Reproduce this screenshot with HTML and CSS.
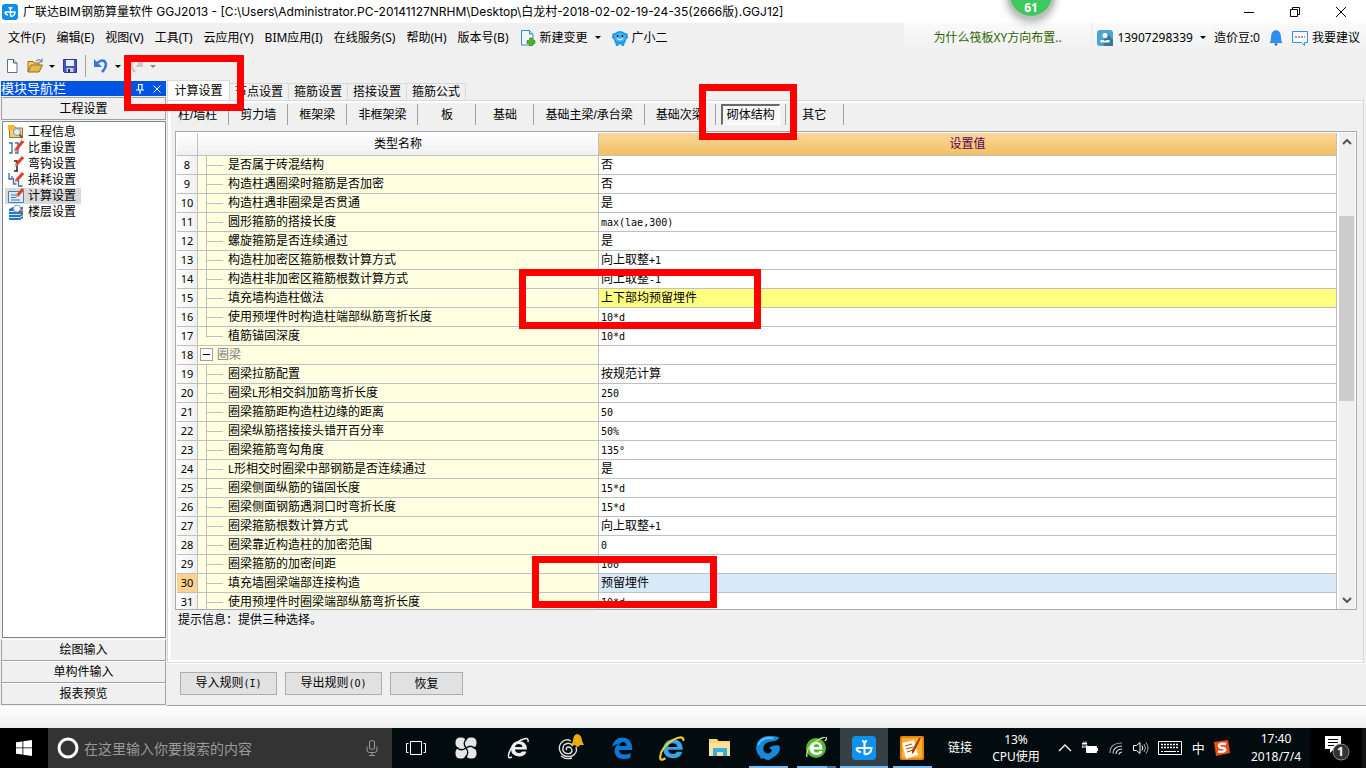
FILE: index.html
```html
<!DOCTYPE html>
<html lang="zh-CN">
<head>
<meta charset="utf-8">
<title>广联达BIM钢筋算量软件 GGJ2013</title>
<link rel="stylesheet" href="styles.css">
</head>
<body>
<header class="titlebar">
  <svg class="icon16" viewBox="0 0 16 16"><rect width="16" height="16" rx="3" fill="#0b8fe8"/><path d="M8.500 12.500V5.500q0-2-2-2M8.500 5.500q0-2 2-2M3 8h10q0 4-4.500 4.500M3 8q0 2.500 3 3" fill="none" stroke="#fff" stroke-width="1.400"/></svg>
  <h1 class="title">广联达BIM钢筋算量软件 GGJ2013 - [C:\Users\Administrator.PC-20141127NRHM\Desktop\白龙村-2018-02-02-19-24-35(2666版).GGJ12]</h1>
  <button class="winbtn" aria-label="最小化"><svg viewBox="0 0 12 12"><path d="M1 6.500h10" stroke="#000" fill="none"/></svg></button>
  <button class="winbtn" aria-label="还原"><svg viewBox="0 0 12 12"><path d="M1.500 3.500h7v7h-7zM3.500 3.500v-2h7v7h-2" stroke="#000" fill="none"/></svg></button>
  <button class="winbtn" aria-label="关闭"><svg viewBox="0 0 12 12"><path d="M1 1l10 10M11 1L1 11" stroke="#000" fill="none"/></svg></button>
</header>

<nav class="menubar">
  <div class="menus">
    <button>文件(F)</button><button>编辑(E)</button><button>视图(V)</button><button>工具(T)</button><button>云应用(Y)</button><button>BIM应用(I)</button><button>在线服务(S)</button><button>帮助(H)</button><button>版本号(B)</button>
    <button class="withicon"><svg class="icon16" viewBox="0 0 16 16"><path d="M1.500.5h8l3.500 3.500v11h-11.500z" fill="#eef7fd" stroke="#2d8fd0"/><path d="M9.500.5v3.500H13" fill="#bfe0f5" stroke="#2d8fd0"/><path d="M9.500 8h3v2.500H15v3h-2.500V16h-3v-2.500H7v-3h2.500z" fill="#4fb61c" stroke="#2f8010" stroke-width=".6"/></svg>新建变更<i class="caret"></i></button>
    <button class="withicon"><svg class="icon16" viewBox="0 0 16 16"><path d="M3 3q5-4 10 0l2.500.5.5 4.500-2 1.500q0 2-1.500 4l-.5 2.500H9.500v-1.500h-3V16H4l-.5-2.500Q2 11.500 2 9.500L0 8l.5-4.500z" fill="#1f9be6"/><ellipse cx="8" cy="7.500" rx="5.500" ry="4.500" fill="#45b2f2"/><circle cx="5.600" cy="6" r="1" fill="#123"/><circle cx="10.400" cy="6" r="1" fill="#123"/><path d="M5 8.500q3 3 6 0" stroke="#fff" fill="none"/></svg>广小二</button>
  </div>
  <a class="tip" href="#">为什么筏板XY方向布置..</a>
  <div class="account">
    <button class="withicon"><svg class="icon16" viewBox="0 0 16 16"><rect width="16" height="16" rx="3" fill="#4ba5d2"/><path d="M6 11l5-7 5 6v6h-9z" fill="#32789f"/><circle cx="8" cy="5.500" r="2.600" fill="#fff"/><path d="M3.500 12.500v-2.500h3L8 11l1.500-1h3v2.500z" fill="#fff"/></svg>13907298339<i class="caret"></i></button>
    <button>造价豆:0</button>
    <button aria-label="通知"><svg class="icon16" viewBox="0 0 16 16"><path d="M8 0q5 1 5 7 0 4 1.500 6h-13Q3 11 3 7 3 1 8 0z" fill="#2f8ff0"/><path d="M6 13.500h4L8 16z" fill="#1a4f8c"/></svg></button>
    <button class="withicon"><svg class="icon16" viewBox="0 0 16 16"><path d="M.5 1.500h15v11h-3v3l-3-3h-9z" fill="#f9fcff" stroke="#2f8ff0"/><path d="M3 7h2m1 0h2m1 0h2m1 0h1" stroke="#444"/></svg>我要建议</button>
  </div>
</nav>

<div class="toolbar">
  <button aria-label="新建"><svg class="icon16" viewBox="0 0 16 16"><path d="M3.500 1.500h6l3.500 3.500v9.500H3.500z" fill="#fff" stroke="#5a7288"/><path d="M9.500 1.500v3.500H13" fill="#d7e6f3" stroke="#40586c"/></svg></button>
  <button class="split" aria-label="打开"><svg class="icon16" viewBox="0 0 16 16"><path d="M1 14V3.500h5l1 1.500h5v2" fill="#f4cf71" stroke="#8d6c1d"/><path d="M1 14l3-7h11.500l-3.500 7z" fill="#e8b84c" stroke="#8d6c1d"/><path d="M9 3q3-3 5.500 0M15 .5V4h-3" fill="none" stroke="#5a6f86"/></svg><i class="caret"></i></button>
  <button aria-label="保存"><svg class="icon16" viewBox="0 0 16 16"><path d="M1.500 1.500h13v13h-12l-1-1z" fill="#4255c4" stroke="#2d388f"/><path d="M4 2h8v6H4z" fill="#e8eefb"/><path d="M4.500 10h7v4h-7z" fill="#c5cde6"/><path d="M6 11h2v3H6z" fill="#222f66"/></svg></button>
  <i class="bar"></i>
  <button class="split" aria-label="撤销"><svg class="icon16" viewBox="0 0 16 16"><path d="M3 6q8-7 10 0 0 4-4 8" fill="none" stroke="#3976d5" stroke-width="2.500"/><path d="M1 1v8h8z" fill="#3976d5"/></svg><i class="caret"></i></button>
  <button class="split off" aria-label="重做"><svg class="icon16" viewBox="0 0 16 16"><path d="M13 6Q5-1 3 6q0 4 4 8" fill="none" stroke="#c9c9c9" stroke-width="2.500"/><path d="M15 1v8H7z" fill="#c9c9c9"/></svg><i class="caret"></i></button>
</div>

<main class="main">
  <aside class="side">
    <h2 class="sidehead"><span>模块导航栏</span>
      <button aria-label="固定"><svg viewBox="0 0 10 10"><path d="M3 .5h5M3.500 0v6M7 0v6M1 6h8M5 6v4" stroke="#fff" stroke-width="1.200" fill="none"/></svg></button>
      <button aria-label="关闭"><svg viewBox="0 0 10 10"><path d="M1.500 1.500l7 7M8.500 1.500l-7 7" stroke="#fff" fill="none"/></svg></button>
    </h2>
    <button class="sidebtn first">工程设置</button>
    <ul class="modules">
      <li><button><svg class="icon16" viewBox="0 0 16 16"><path d="M1.500 13.500v-11h5L8 4h6.500v9.500z" fill="#f2cf76" stroke="#9b7833"/><path d="M0 1h6v5H0z" fill="#ffb91f"/><circle cx="9" cy="8" r="3.500" fill="#dceffc" stroke="#7894ad"/><path d="M11.500 10.500l3 3.500" stroke="#8a5b28" stroke-width="2"/></svg>工程信息</button></li>
      <li><button><svg class="icon16" viewBox="0 0 16 16"><path d="M1 3h3v10H1M7 3h3v10H7" fill="none" stroke="#3a6cb0" stroke-width="1.300"/><path d="M15 1L7 11" stroke="#e2402b" stroke-width="3"/><path d="M7.500 9l1.500 1.500L6 13z" fill="#d9a86c"/></svg>比重设置</button></li>
      <li><button><svg class="icon16" viewBox="0 0 16 16"><path d="M6 5h3v10M6 15h4" fill="none" stroke="#222" stroke-width="1.500"/><path d="M15 1L8 9" stroke="#e2402b" stroke-width="3"/><path d="M7.500 7l2 2L6 11z" fill="#d9a86c"/></svg>弯钩设置</button></li>
      <li><button><svg class="icon16" viewBox="0 0 16 16"><path d="M1 1v6h3v-3M5.500 6v6h3M10.500 8v6h4" fill="none" stroke="#3a6cb0" stroke-width="1.300"/><path d="M15 1L8 9" stroke="#e2402b" stroke-width="3"/><path d="M7.500 7l2 2L6 11z" fill="#d9a86c"/></svg>损耗设置</button></li>
      <li><button class="on"><svg class="icon16" viewBox="0 0 16 16"><path d="M.5 3.500h15v11H.5z" fill="#dcebfa" stroke="#4a7fb5"/><path d="M3 7h5M3 9.500h5M3 12h9" stroke="#3f78b5"/><path d="M15 1L9 8" stroke="#e2402b" stroke-width="3"/><path d="M8.500 6l2 2L7 10z" fill="#d9a86c"/></svg>计算设置</button></li>
      <li><button><svg class="icon16" viewBox="0 0 16 16"><path d="M1 5l4-2h10v11l-3 2H1z" fill="#2577c6"/><path d="M1 7.500h11l3-2M1 10.500h11l3-2M1 13.500h11l3-2" stroke="#cfe4f7" fill="none"/><circle cx="9" cy="4.500" r="3.500" fill="#eef7fd" stroke="#8aa2b8"/><path d="M11.500 7l3 3" stroke="#8a5b28" stroke-width="2"/></svg>楼层设置</button></li>
    </ul>
    <button class="sidebtn">绘图输入</button>
    <button class="sidebtn">单构件输入</button>
    <button class="sidebtn">报表预览</button>
  </aside>

  <section class="work">
    <div class="tabs">
      <button class="on">计算设置</button><button>节点设置</button><button>箍筋设置</button><button>搭接设置</button><button>箍筋公式</button>
    </div>
    <div class="page">
      <div class="parts">
        <button>柱/墙柱</button><button>剪力墙</button><button>框架梁</button><button>非框架梁</button><button>板</button><button>基础</button><button>基础主梁/承台梁</button><button>基础次梁</button><button class="on"><span>砌体结构</span></button><button>其它</button>
      </div>
      <div class="grid">
        <div class="view">
          <table>
            <colgroup><col class="cnum"><col class="cname"><col></colgroup>
            <thead><tr><th></th><th>类型名称</th><th class="hot">设置值</th></tr></thead>
            <tbody>
              <tr><th>8</th><td><i class="branch"></i>是否属于砖混结构</td><td>否</td></tr>
              <tr><th>9</th><td><i class="branch"></i>构造柱遇圈梁时箍筋是否加密</td><td>否</td></tr>
              <tr><th>10</th><td><i class="branch"></i>构造柱遇非圈梁是否贯通</td><td>是</td></tr>
              <tr><th>11</th><td><i class="branch"></i>圆形箍筋的搭接长度</td><td><code>max(lae,300)</code></td></tr>
              <tr><th>12</th><td><i class="branch"></i>螺旋箍筋是否连续通过</td><td>是</td></tr>
              <tr><th>13</th><td><i class="branch"></i>构造柱加密区箍筋根数计算方式</td><td>向上取整<code>+1</code></td></tr>
              <tr><th>14</th><td><i class="branch"></i>构造柱非加密区箍筋根数计算方式</td><td>向上取整<code>-1</code></td></tr>
              <tr class="changed"><th>15</th><td><i class="branch"></i>填充墙构造柱做法</td><td>上下部均预留埋件</td></tr>
              <tr><th>16</th><td><i class="branch"></i>使用预埋件时构造柱端部纵筋弯折长度</td><td><code>10*d</code></td></tr>
              <tr><th>17</th><td><i class="branch last"></i>植筋锚固深度</td><td><code>10*d</code></td></tr>
              <tr class="group"><th>18</th><td><button class="fold" aria-label="折叠"></button>圈梁</td><td></td></tr>
              <tr><th>19</th><td><i class="branch"></i>圈梁拉筋配置</td><td>按规范计算</td></tr>
              <tr><th>20</th><td><i class="branch"></i>圈梁<code>L</code>形相交斜加筋弯折长度</td><td><code>250</code></td></tr>
              <tr><th>21</th><td><i class="branch"></i>圈梁箍筋距构造柱边缘的距离</td><td><code>50</code></td></tr>
              <tr><th>22</th><td><i class="branch"></i>圈梁纵筋搭接接头错开百分率</td><td><code>50%</code></td></tr>
              <tr><th>23</th><td><i class="branch"></i>圈梁箍筋弯勾角度</td><td><code>135°</code></td></tr>
              <tr><th>24</th><td><i class="branch"></i><code>L</code>形相交时圈梁中部钢筋是否连续通过</td><td>是</td></tr>
              <tr><th>25</th><td><i class="branch"></i>圈梁侧面纵筋的锚固长度</td><td><code>15*d</code></td></tr>
              <tr><th>26</th><td><i class="branch"></i>圈梁侧面钢筋遇洞口时弯折长度</td><td><code>15*d</code></td></tr>
              <tr><th>27</th><td><i class="branch"></i>圈梁箍筋根数计算方式</td><td>向上取整<code>+1</code></td></tr>
              <tr><th>28</th><td><i class="branch"></i>圈梁靠近构造柱的加密范围</td><td><code>0</code></td></tr>
              <tr><th>29</th><td><i class="branch"></i>圈梁箍筋的加密间距</td><td><code>100</code></td></tr>
              <tr class="current"><th>30</th><td><i class="branch"></i>填充墙圈梁端部连接构造</td><td>预留埋件</td></tr>
              <tr><th>31</th><td><i class="branch"></i>使用预埋件时圈梁端部纵筋弯折长度</td><td><code>10*d</code></td></tr>
            </tbody>
          </table>
        </div>
        <div class="scroll">
          <button aria-label="向上"><svg viewBox="0 0 10 6"><path d="M1 5l4-4 4 4" fill="none" stroke="#555" stroke-width="2"/></svg></button>
          <i class="above"></i><i class="thumb"></i><i class="below"></i>
          <button aria-label="向下"><svg viewBox="0 0 10 6"><path d="M1 1l4 4 4-4" fill="none" stroke="#555" stroke-width="2"/></svg></button>
        </div>
      </div>
      <p class="hint">提示信息：提供三种选择。</p>
    </div>
    <div class="actions">
      <button>导入规则<code>(I)</code></button><button>导出规则<code>(O)</code></button><button class="small">恢复</button>
    </div>
  </section>
</main>

<div class="status"></div>

<footer class="taskbar">
  <button class="start" aria-label="开始"><svg class="icon16" viewBox="0 0 16 16"><path d="M0 2.300L6.500 1.400v6.100H0zM7.300 1.300L16 0v7.500H7.300zM0 8.300h6.500v6.300L0 13.700zM7.300 8.300H16V16l-8.700-1.300z" fill="#fff"/></svg></button>
  <div class="search">
    <svg class="icon22" viewBox="0 0 22 22"><circle cx="11" cy="11" r="9" fill="none" stroke="#fff" stroke-width="3"/></svg>
    <input type="text" aria-label="搜索" placeholder="在这里输入你要搜索的内容">
    <svg class="icon16" viewBox="0 0 16 16"><path d="M5.500 1.500q2.500-2 5 0v7q-2.500 2-5 0zM3 6.500v3.500q0 2.500 2.500 2.500h5q2.500 0 2.500-2.500V6.500M8 12.500v3M5 15.500h6" fill="none" stroke="#999"/></svg>
  </div>
  <button class="app" aria-label="任务视图"><svg class="icon22" viewBox="0 0 22 22"><path d="M5.500 4.500h11v13h-11zM3.500 6.500h-2v9h2M18.500 6.500h2v9h-2" fill="none" stroke="#fff"/></svg></button>
  <button class="app wide" aria-label="风车"><svg class="icon22" viewBox="0 0 22 22"><g fill="#e6e6e6"><rect x=".5" y=".5" width="10.500" height="10.500" rx="4.500"/><rect x="11" y=".5" width="10.500" height="10.500" rx="4.500"/><rect x=".5" y="11" width="10.500" height="10.500" rx="4.500"/><rect x="11" y="11" width="10.500" height="10.500" rx="4.500"/><circle cx="11" cy="11" r="4"/></g><path d="M11 11Q7 6 12 1M11 11q5-4 10 1M11 11q4 5-1 10M11 11q-5 4-10-1" fill="none" stroke="#071013" stroke-width="1.300"/></svg></button>
  <button class="app wide" aria-label="浏览器"><svg class="icon22" viewBox="0 0 22 22"><path d="M20 12.500H8q.5 3.500 4 3.500 2 0 3-1.500h4.500Q18 19.500 12 19.500 4 19 4 12q.5-7.500 8-8 8 .5 8 8.500zM8 10h7.500q-.5-3-3.700-3Q8.500 7 8 10z" fill="#eee" fill-rule="evenodd"/><path d="M5 20q-4 2-3.500-2Q3 9 14 3q8-4 7 2" fill="none" stroke="#eee" stroke-width="1.500"/></svg></button>
  <button class="app wide" aria-label="提醒"><svg class="icon28" viewBox="0 0 28 28"><path d="M15 7Q10 4 6 8q-5 5-1 11 4 5 11 3 6-3 4-9M17 12q-4-5-9-1-3 5 1 8 6 2 7-2 0-4-4-4-3 1-1 3M5 22q5 4 11 2" fill="none" stroke="#ddd" stroke-width="1.400"/><path d="M21 0q5 1 5 7l2 4H15l2-4q0-6 4-7zM19 11h5q-2.500 4-5 0z" fill="#e8ae0b"/></svg></button>
  <button class="app wide" aria-label="Edge"><svg class="icon22" viewBox="0 0 22 22"><path d="M1 10Q3 .5 11.500.5 21 1 21 11v2H8q.5 4.500 5.500 4.500 3.500 0 6-1.500v4.500Q17 22 12 22q-8-.5-8.500-8Q3.500 9 8 6.500 4 7 1 10zM8 9h7.500q0-4-3.500-4-3.500.5-4 4z" fill="#0a78d6" fill-rule="evenodd"/></svg></button>
  <button class="app" aria-label="Internet Explorer"><svg class="icon26" viewBox="0 0 24 24"><path d="M22 13.500H8.500q.5 4 4.500 4 2.500 0 3.500-2h5Q20 21.500 13 21.500 4 21 4 13q.5-8.500 9-9 9 .5 9 9.500zM8.500 11H17q-.5-3.500-4.200-3.500Q9 7.500 8.500 11z" fill="#35a5e8" fill-rule="evenodd"/><path d="M6 21.500q-5 3-5-1Q2 11 13 4.500q10-5 9.500 1" fill="none" stroke="#f5c927" stroke-width="2"/></svg></button>
  <button class="app" aria-label="文件资源管理器"><svg class="icon22" viewBox="0 0 22 22"><path d="M0 2h8l1.500 2H21v15H0z" fill="#f8d775"/><path d="M0 6h21v13H0z" fill="#fbe49a"/><path d="M4 19v-8h14v8h-4v-4H8v4z" fill="#35aee2"/></svg></button>
  <button class="app run" aria-label="G浏览器"><svg class="icon26" viewBox="0 0 24 24"><path d="M22.500 2q-2 4-8 4Q8 7 7.500 12.500 8 17 12 17q3.500-.5 3.500-3.500L13 12q3-3 9-2.500 2 3 0 6.500-1.500 3-5 4.500L13 23q-3 .5-5-1.500l-3 .5v-2Q1 17 1 12 2 1.500 12 1q5-.5 10.500 1z" fill="#1788dc"/><path d="M3 9Q7 1 17 3" fill="none" stroke="#6bc3fa" stroke-width="1.500"/></svg></button>
  <button class="app run multi" aria-label="安全浏览器"><svg class="icon22" viewBox="0 0 22 22"><circle cx="11" cy="11" r="10" fill="#53b833"/><path d="M17.500 12.500H8.500q.5 3 3 3t3-1.500h3q-1 4-6 4Q5 18 4.500 11.500 5 5 11 4.500q6.500.5 6.500 8zM8.500 10h6q-.5-3-3-3t-3 3z" fill="#fff" fill-rule="evenodd"/><path d="M2 20Q0 10 13 3t7 1" fill="none" stroke="#c9eda7" stroke-width="1.300"/></svg></button>
  <button class="app run active" aria-label="GGJ2013"><svg class="icon24" viewBox="0 0 24 24"><rect width="24" height="24" rx="4" fill="#0d93ee"/><path d="M12.500 18.500V8q0-3-2.500-3M12.500 8q0-3 2.500-3M4.500 12h15q0 6-7 6.500M4.500 12q0 3.500 4.500 4" fill="none" stroke="#fff" stroke-width="2"/></svg></button>
  <button class="app run" aria-label="记事"><svg class="icon24" viewBox="0 0 24 24"><rect width="24" height="24" rx="2" fill="#e8830c"/><path d="M2 2h20v20H2z" fill="#f7b233"/><path d="M2 7l12-3 4 15-12 4z" fill="#fffbe8"/><path d="M5 10l7-2M6 13l7-2M7 16l6-2" stroke="#8c5a18"/><path d="M21 2l-7 14-2 2 0-4 7-12z" fill="#b33410"/></svg></button>
  <span class="links">链接</span>
  <span class="cpu">13%<br>CPU使用</span>
  <div class="tray">
    <svg class="icon16" viewBox="0 0 16 16"><path d="M2 11l6-6 6 6" fill="none" stroke="#fff" stroke-width="1.300"/></svg>
    <svg class="icon16" viewBox="0 0 16 16"><path d="M4.500 6.500h10v6h-10z" fill="#fff" stroke="#fff"/><path d="M15.500 8v3" stroke="#fff"/><path d="M0 3.500h5M2 1.500v4M4 1.500v4M0 7h4l1-2M0 4v4" fill="none" stroke="#fff"/></svg>
    <svg class="icon16" viewBox="0 0 16 16"><g fill="none" stroke="#ddd" stroke-width="1.200"><path d="M2 13Q2 3 14 3" stroke="#999"/><path d="M5 13.500Q5 6.500 14 6"/><path d="M8 14q0-4.500 6-5"/><path d="M11 14.500q0-2 3-2.500"/></g></svg>
    <svg class="icon16" viewBox="0 0 16 16"><path d="M.5 5.500h3l3.500-3v11l-3.500-3h-3zM9 5.500q1.500 2.500 0 5" fill="none" stroke="#fff"/><path d="M11 4q3 4 0 8M13 2.500q4 5.500 0 11" fill="none" stroke="#aaa"/></svg>
    <svg class="keyb" viewBox="0 0 24 14"><path d="M.5.5h23v13H.5z" fill="none" stroke="#fff"/><path d="M3 3.500h18M3 6.500h18" stroke="#fff" stroke-width="1.500" stroke-dasharray="2 1"/><path d="M3 10.500h2m1 0h12m1 0h2" stroke="#fff"/></svg>
    <span class="ime">中</span>
    <svg class="icon16" viewBox="0 0 16 16"><path d="M0 2l14-2 2 13-14 3z" fill="#ee4b16"/><path d="M12 4Q5 3 5 5.500t4 2.500q3 .5 2 2.500-1.500 2-7 1" fill="none" stroke="#fff" stroke-width="2.400"/></svg>
  </div>
  <time class="clock">17:40<br>2018/7/4</time>
  <button class="notice" aria-label="操作中心"><svg viewBox="0 0 26 26"><path d="M0 1h16v13H9l-4 4v-4H0z" fill="#fff"/><path d="M3 4.500h10M3 7.500h10M3 10.500h6" stroke="#000"/><circle cx="16" cy="17" r="8" fill="#333" stroke="#888"/></svg><b>1</b></button>
</footer>

<div class="ball">61</div>
<div class="mark m1"></div>
<div class="mark m2"></div>
<div class="mark m3"></div>
<div class="mark m4"></div>
</body>
</html>
```
FILE: styles.css
```css
* { box-sizing: border-box; }
body {
  margin: 0;
  height: 100vh;
  display: flex;
  flex-direction: column;
  background: #f0f0f0;
  color: #000;
  font: 12px/16px "Noto Sans", "Noto Sans CJK SC", sans-serif;
  position: relative;
  overflow: hidden;
}
button {
  margin: 0;
  padding: 0;
  border: 0;
  background: none;
  color: inherit;
  font: inherit;
  white-space: nowrap;
}
svg { display: block; flex: none; }
code { font: 10px/16px "DejaVu Sans Mono", monospace; }
.icon16 { width: 16px; height: 16px; }
.icon22 { width: 22px; height: 22px; }
.icon24 { width: 24px; height: 24px; }
.icon26 { width: 26px; height: 26px; }
.icon28 { width: 28px; height: 28px; }
.caret {
  border: 3px solid transparent;
  border-top-color: #000;
  border-bottom: 0;
}

/* Title bar */
.titlebar { display: flex; align-items: center; flex: none; height: 23px; padding: 0 2px; background: #fff; }
.title { flex: 1; margin: 0 0 0 5px; font: 400 12px/16px Inter, "Noto Sans CJK SC", sans-serif; white-space: nowrap; }
.winbtn { width: 46px; display: flex; justify-content: center; }
.winbtn svg { width: 12px; height: 12px; }

/* Menu bar */
.menubar { display: flex; flex: none; height: 29px; }
.menus { flex: 1; display: flex; align-items: center; gap: 11px; padding-left: 8px; }
.withicon { display: flex; align-items: center; gap: 4px; }
.withicon .caret { margin-left: 3px; }
.tip {
  width: 187px;
  margin-right: 2px;
  padding-left: 29px;
  line-height: 29px;
  color: #2f6400;
  text-decoration: none;
  background: linear-gradient(#fafafa, #f0f0f0);
}
.account { display: flex; align-items: center; gap: 8px; padding: 0 6px 0 4px; background: linear-gradient(#fafafa, #f0f0f0); }

/* Toolbar */
.toolbar { display: flex; align-items: center; flex: none; gap: 7px; height: 28px; padding-left: 4px; }
.split { display: flex; align-items: center; gap: 6px; }
.bar { width: 1px; height: 22px; background: #a0a0a0; }
.off .caret { border-top-color: #888; }

/* Main area */
.main { flex: 1; display: flex; min-height: 0; font-family: "Liberation Sans", "Noto Sans CJK SC", sans-serif; }
.side { width: 166px; display: flex; flex-direction: column; padding: 1px 0 1px 1px; }
.sidehead { display: flex; align-items: center; gap: 7px; margin: 0 0 1px; height: 15px; padding-right: 4px; background: #0054e3; color: #fff; font-size: 13px; line-height: 15px; font-weight: 400; }
.sidehead span { flex: 1; }
.sidehead svg { width: 10px; height: 10px; }
.sidebtn { height: 22px; border: 1px solid #a0a0a0; border-top: 1px solid #fff; }
.first { height: 23px; border-top-color: #a0a0a0; margin-bottom: 1px; }
.modules { flex: 1; margin: 0 0 1px 1px; padding: 2px 1px 0 2px; list-style: none; background: #fff; border: 1px solid #828790; }
.modules button { display: flex; align-items: center; gap: 4px; height: 16px; padding: 0 5px 0 3px; }
.modules .on { background: #d9d9d9; }

.work { flex: 1; min-width: 0; margin-left: 1px; display: flex; flex-direction: column; border-bottom: 1px solid #a0a0a0; }
.tabs { display: flex; align-items: flex-end; height: 20px; }
.tabs button { width: 59px; height: 17px; border: 1px solid #d9d9d9; border-width: 1px 1px 0 0; }
.tabs .on { width: 63px; height: 20px; background: #fff; border-left-width: 1px; }
.page { flex: 1; min-height: 0; margin-right: 2px; display: flex; flex-direction: column; border: 1px solid #d9d9d9; box-shadow: inset 0 2px #fff, inset 3px 0 #fff, inset 0 -2px #fff; padding: 3px 6px 2px 7px; }
.parts { display: flex; height: 21px; margin-bottom: 6px; }
.parts button { min-width: 58px; padding: 0 11px; border-right: 1px solid #a0a0a0; }
.parts button:first-child { padding-left: 3px; min-width: 50px; }
.parts .on { padding: 0 5px; }
.parts .on span { display: block; padding: 1px 4px; border: 1px solid #fff; border-width: 2px 1px 1px 2px; border-top-color: #696969; border-left-color: #696969; background: #f8f8f8; }

.grid { flex: 1; min-height: 0; display: flex; border: 1px solid #a7abb0; padding: 1px 1px 0 1px; background: #fff; }
.view { flex: 1; min-width: 0; overflow: hidden; }
table { width: 100%; table-layout: fixed; border-collapse: separate; border-spacing: 0; border-right: 1px solid #c0c0c0; }
.cnum { width: 21px; }
.cname { width: 401px; }
th, td { padding: 0; height: 19px; line-height: 18px; font-weight: 400; white-space: nowrap; border: 0 solid #c0c0c0; border-width: 0 1px 1px 0; }
td:last-child, .hot { border-right: 0; }
thead th { height: 23px; background: linear-gradient(#fff, #f0f0f0); }
thead .hot { background: linear-gradient(#fbd79c, #f0c060); color: #5a005a; }
tbody th { background: linear-gradient(90deg, #fff, #f0f0f0); font: 11px/18px "Noto Sans", sans-serif; }
td { padding-left: 2px; }
td:nth-child(2) { background: #ffffe1; padding-left: 8px; }
.branch { display: inline-block; vertical-align: top; width: 17px; height: 18px; margin-right: 5px; background: linear-gradient(#c0c0c0, #c0c0c0) 0 9px / 17px 1px no-repeat, linear-gradient(#c0c0c0, #c0c0c0) 0 0 / 1px 18px no-repeat; }
.last { background-size: 17px 1px, 1px 9px; }
.group td:nth-child(2) { color: #808080; padding-left: 2px; }
.fold { width: 13px; height: 13px; margin: 2px 4px 0 0; vertical-align: top; border: 1px solid #a0a0a0; background: linear-gradient(#000, #000) center / 7px 1px no-repeat #fff; }
.changed td:last-child { background: #ffff80; }
.current th { background: #fbd38f; }
.current td:last-child { background: #d8e9f7; }

.scroll { width: 16px; margin-left: 2px; display: flex; flex-direction: column; background: #f0f0f0; }
.scroll button { height: 17px; display: flex; align-items: center; justify-content: center; }
.scroll svg { width: 10px; height: 6px; }
.above { flex: 66; }
.thumb { flex: 186; margin-right: 1px; background: #cdcdcd; }
.below { flex: 191; }
.hint { flex: none; margin: 0; height: 50px; padding: 2px 3px; }

.actions { display: flex; gap: 8px; padding: 8px 13px 10px; border-top: 1px solid #fff; }
.actions button { width: 97px; height: 23px; border: 1px solid #adadad; background: #e1e1e1; }
.actions .small { width: 73px; }
.status { flex: none; height: 22px; background: linear-gradient(#fff, #eee); }

/* Taskbar */
.taskbar { display: flex; flex: none; height: 40px; background: #020b0e; color: #fff; }
.start { width: 48px; display: flex; align-items: center; justify-content: center; background: #000; }
.search { width: 344px; display: flex; align-items: center; gap: 5px; padding: 0 12px 0 9px; background: #333; }
.search input { flex: 1; min-width: 0; border: 0; padding: 0; outline: 0; background: none; color: #fff; font: 14px/20px "Noto Sans CJK SC", sans-serif; }
.search input::placeholder { color: #9a9a9a; opacity: 1; }
.app { width: 48px; display: flex; align-items: center; justify-content: center; }
.wide { width: 52px; }
.run { background: linear-gradient(#76b9ed, #76b9ed) center bottom / 39px 2px no-repeat; }
.multi { background: linear-gradient(90deg, #76b9ed 30px, #46749a 30px) center bottom / 39px 2px no-repeat; }
.active { background: linear-gradient(#76b9ed, #76b9ed) center bottom / 48px 2px no-repeat #364145; }
.links { width: 48px; line-height: 40px; text-align: center; }
.cpu { width: 64px; padding-top: 3px; line-height: 17px; text-align: center; }
.tray { flex: 1; display: flex; align-items: center; justify-content: space-between; padding: 0 0 0 9px; }
.keyb { width: 24px; height: 14px; }
.ime { font-size: 13px; }
.clock { width: 68px; margin-left: 12px; padding-top: 2px; line-height: 18px; text-align: center; white-space: nowrap; }
.notice { position: relative; width: 56px; padding-left: 15px; background: #000; border-right: 4px solid #111; }
.notice svg { width: 26px; height: 26px; }
.notice b { position: absolute; left: 27px; top: 16px; }

/* Overlays */
.ball { position: absolute; left: 1007px; top: -29px; width: 48px; height: 48px; padding-top: 26px; border: 3px solid #b9c4bd; border-radius: 50%; background: #3fc860; color: #fff; font-weight: 700; text-align: center; box-shadow: 0 3px 8px #0005; }
.mark { position: absolute; border: 7px solid #f00; pointer-events: none; }
.m1 { left: 124px; top: 55px; width: 120px; height: 56px; }
.m2 { left: 699px; top: 84px; width: 98px; height: 56px; }
.m3 { left: 519px; top: 269px; width: 242px; height: 60px; }
.m4 { left: 532px; top: 556px; width: 185px; height: 52px; }
```
